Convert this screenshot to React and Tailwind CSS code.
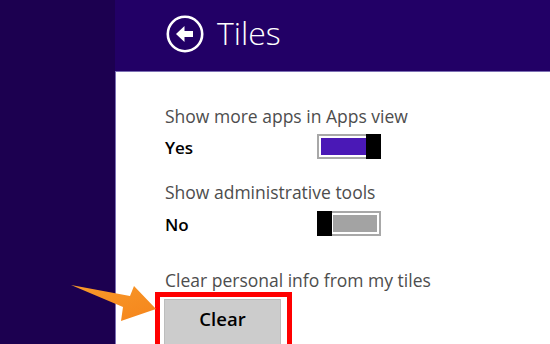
import React from "react";

function Toggle({ on }) {
  if (on) {
    return (
      <div className="flex h-[25px] w-[64px]">
        <div className="flex-1 border-y-2 border-l-2 border-[#a8a8a8] bg-white pl-[2px] py-[2px]">
          <div className="h-full w-full bg-[#4a18b6]" />
        </div>
        <div className="w-[15px] bg-black" />
      </div>
    );
  }
  return (
    <div className="flex h-[25px] w-[64px]">
      <div className="w-[15px] bg-black" />
      <div className="flex-1 border-y-2 border-r-2 border-[#a8a8a8] bg-white pl-[1px] pr-[2px] py-[2px]">
        <div className="h-full w-full bg-[#a3a3a3]" />
      </div>
    </div>
  );
}

export default function App() {
  const font = { fontFamily: '"Open Sans", "Noto Sans", Arial, sans-serif' };
  return (
    <div className="relative flex h-[344px] w-[550px] overflow-hidden" style={font}>
      <div className="w-[115px] shrink-0 bg-[#1c0050]" />
      <div className="flex flex-1 flex-col">
        <div className="flex h-[71px] shrink-0 items-center bg-[#220066] pl-[51px]">
          <svg width="38" height="38" viewBox="0 0 38 38" className="mt-[-3px]">
            <circle cx="19" cy="19" r="17.2" fill="none" stroke="white" strokeWidth="2.6" />
            <path d="M10 19 L18.5 11 L18.5 16 L27 16 L27 22 L18.5 22 L18.5 27 Z" fill="white" />
          </svg>
          <span className="ml-[13px] mt-[-6px] text-[32px] font-light leading-[40px] text-white">Tiles</span>
        </div>
        <div className="flex flex-1 flex-col border-l border-t border-[#7b6fb3] bg-white pl-[49px] pt-[34px]">
          <div className="h-[20px] text-[17.5px] leading-[20px] text-[#4d4d4d]">Show more apps in Apps view</div>
          <div className="mt-[8px] flex h-[25px] items-center">
            <span className="w-[152px] pt-[2px] text-[17px] font-semibold leading-[25px] text-black">Yes</span>
            <Toggle on />
          </div>
          <div className="mt-[23px] h-[20px] text-[17.5px] leading-[20px] text-[#4d4d4d]">Show administrative tools</div>
          <div className="mt-[9px] flex h-[25px] items-center">
            <span className="w-[152px] pt-[2px] text-[17px] font-semibold leading-[25px] text-black">No</span>
            <Toggle />
          </div>
          <div className="mt-[34px] h-[20px] text-[17.5px] leading-[20px] text-[#4d4d4d]">Clear personal info from my tiles</div>
          <div className="ml-[-10px] mt-[2px] h-[70px] w-[137px] border-[5px] border-[#ff0000] bg-white pl-[4px] pr-[6px] pt-[2px]">
            <div className="flex h-[60px] justify-center border border-[#bdbdbd] bg-[#cccccc] pt-[7px]">
              <span className="text-[18.5px] font-semibold leading-[24px] text-black">Clear</span>
            </div>
          </div>
        </div>
      </div>
      <svg className="pointer-events-none absolute left-0 top-0" width="550" height="344">
        <defs>
          <linearGradient id="og" x1="0" y1="0" x2="1" y2="1">
            <stop offset="0" stopColor="#f89a2a" />
            <stop offset="1" stopColor="#f5851c" />
          </linearGradient>
        </defs>
        <polygon points="71,285 130,296 134,286 156,309 121,321 123,307" fill="url(#og)" />
      </svg>
    </div>
  );
}
